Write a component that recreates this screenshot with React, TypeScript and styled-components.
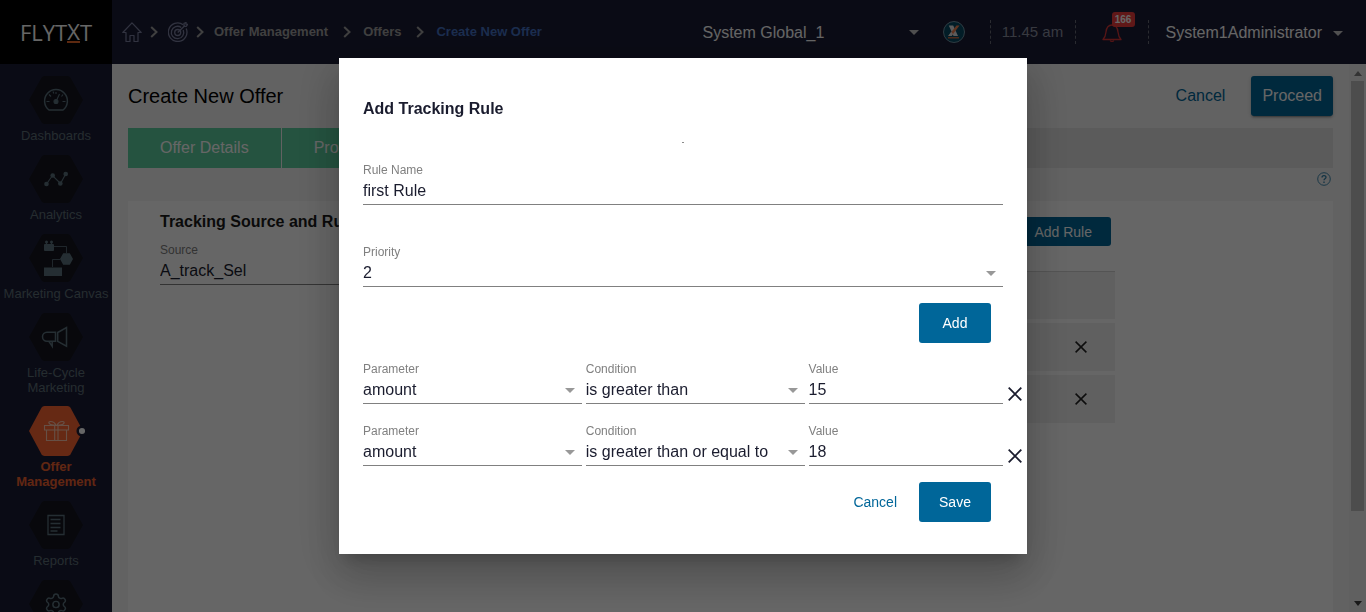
import React, { useId, useState } from "react";
import styled, { createGlobalStyle, css } from "styled-components";
import { Settings } from "lucide-react";

const GlobalStyle = createGlobalStyle`
  *, *::before, *::after { box-sizing: border-box; }
  html, body { margin: 0; height: 100%; overflow: hidden; }
  body { font-family: "Liberation Sans", Arial, sans-serif; font-size: 16px; line-height: 20px; color: #1a1c2e; background: #f5f5f5; }
  button, input, select { font: inherit; color: inherit; margin: 0; padding: 0; border: 0; background: none; border-radius: 0; }
  button { cursor: pointer; }
  h1, h2, ol, ul { margin: 0; padding: 0; }
  ol, ul { list-style: none; }
  a { color: inherit; text-decoration: none; }
  svg { display: block; flex: none; }
`;

/* ---------- page frame ---------- */

const Shell = styled.div`
  height: 100vh;
  display: flex;
  flex-direction: column;
`;

const Header = styled.header`
  flex: none;
  height: 64px;
  display: flex;
  align-items: center;
  background: #1b1d36;
  color: #fff;
`;

const Logo = styled.a`
  flex: none;
  width: 112px;
  height: 64px;
  display: flex;
  align-items: center;
  justify-content: center;
  background: #000;
  font-family: "Open Sans", "Noto Sans", sans-serif;
  font-size: 22px;
  line-height: 24px;
`;

const LogoMark = styled.span`
  border-bottom: 2px solid #e8662a;
  line-height: 20px;
`;

const Crumbs = styled.ol`
  flex: 1;
  display: flex;
  align-items: center;
  padding-left: 10px;
  font-size: 13px;
  font-weight: bold;
  color: #a0a0a0;
`;

const Crumb = styled.li<{ $current?: boolean }>`
  display: flex;
  align-items: center;
  color: ${(p) => (p.$current ? "#4472c4" : "inherit")};
`;

const CrumbArrow = styled.svg<{ $wide?: boolean }>`
  margin: ${(p) => (p.$wide ? "0 12px 0 15px" : "0 10px 0 8px")};
`;

const ScopePicker = styled.label`
  width: 216px;
  flex: none;
  display: flex;
  align-items: center;
  margin-right: 24px;
`;

const ScopeSelect = styled.select`
  flex: 1;
  min-width: 0;
  appearance: none;
  height: 24px;
  padding-top: 2px;
`;

const Clock = styled.time`
  display: flex;
  align-items: center;
  justify-content: center;
  height: 24px;
  width: 86px;
  margin-left: 25px;
  border: 1px dashed #6a6c78;
  border-width: 0 1px;
  font-size: 15px;
  color: #8b90a0;
`;

const Alerts = styled.button`
  position: relative;
  width: 73px;
  height: 24px;
  padding-left: 26px;
  border-right: 1px dashed #6a6c78;
`;

const Badge = styled.span`
  position: absolute;
  left: 36px;
  top: -8px;
  width: 23px;
  height: 15px;
  border-radius: 3px;
  background: #f13c3c;
  color: #fff;
  font-size: 10px;
  line-height: 15px;
  font-weight: bold;
  text-align: center;
`;

const UserMenu = styled.button`
  display: flex;
  align-items: center;
  gap: 11px;
  padding: 2px 23px 0 17px;
`;

const Body = styled.div`
  flex: 1;
  min-height: 0;
  display: flex;
`;

/* ---------- side navigation ---------- */

const SideNav = styled.nav`
  flex: none;
  width: 112px;
  overflow: hidden;
  background: #1b1d36;
  padding-top: 12px;
`;

const NavList = styled.ul`
  display: flex;
  flex-direction: column;
  gap: 12px;
`;

const NavLink = styled.a<{ $active?: boolean }>`
  display: flex;
  flex-direction: column;
  align-items: center;
  gap: 4px;
  text-align: center;
  font-size: 13px;
  line-height: 15px;
  color: #5e7078;
  ${(p) => p.$active && css`
    color: #f3622f;
    font-weight: bold;
  `}
`;

const Hex = styled.svg<{ $active?: boolean }>`
  margin: ${(p) => (p.$active ? "-1px 0" : "0")};
  overflow: visible;
`;

const NavText = styled.span<{ $narrow?: boolean }>`
  width: ${(p) => (p.$narrow ? "84px" : "auto")};
  white-space: ${(p) => (p.$narrow ? "normal" : "nowrap")};
`;

/* ---------- page content ---------- */

const Main = styled.main`
  flex: 1;
  min-width: 0;
  display: flex;
  flex-direction: column;
  padding: 12px 16px 0;
`;

const TitleRow = styled.div`
  display: flex;
  align-items: center;
  height: 40px;
  margin-bottom: 12px;
`;

const PageTitle = styled.h1`
  flex: 1;
  font-size: 20px;
  line-height: 24px;
  font-weight: normal;
  color: #000;
`;

const Button = styled.button<{ $kind?: "flat" | "small" | "page" }>`
  height: 40px;
  min-width: 72px;
  border-radius: 3px;
  background: #006699;
  color: #fff;
  font-size: 14px;
  ${(p) => p.$kind === "page" && css`
    padding: 0 11px;
    font-size: 16px;
    box-shadow: 0 3px 1px -2px rgba(0, 0, 0, 0.2), 0 2px 2px rgba(0, 0, 0, 0.14), 0 1px 5px rgba(0, 0, 0, 0.12);
  `}
  ${(p) => p.$kind === "small" && css`
    height: 29px;
    padding: 0 19px;
  `}
  ${(p) => p.$kind === "flat" && css`
    min-width: 0;
    background: none;
    color: #006699;
  `}
`;

const PageCancel = styled.a`
  color: #006699;
  margin-right: 26px;
`;

const Stepper = styled.ol`
  display: flex;
  height: 40px;
  background: #e4e4e4;
`;

const Step = styled.li`
  display: flex;
  align-items: center;
  padding: 0 32px;
  background: #5cd0a0;
  color: #fff;
  border-right: 1px solid #f5f5f5;
`;

const HelpRow = styled.div`
  display: flex;
  align-items: flex-start;
  justify-content: flex-end;
  height: 33px;
  padding: 4px 2px 0 0;
`;

const Card = styled.section`
  flex: 1;
  display: grid;
  grid-template-columns: 1fr 2fr;
  gap: 40px;
  padding: 0 218px 0 32px;
  background: #fff;
`;

const SourceColumn = styled.div`
  padding-top: 11px;
`;

const SectionTitle = styled.h2`
  margin-bottom: 11px;
  font-size: 16px;
  white-space: nowrap;
  color: #1a1a1a;
`;

const RulesColumn = styled.div`
  display: flex;
  flex-direction: column;
  padding-top: 16px;
`;

const RulesToolbar = styled.div`
  display: flex;
  justify-content: flex-end;
  padding: 0 4px 21px 0;
`;

const RulesTable = styled.table`
  width: 100%;
  border-spacing: 0 4px;
  font-size: 14px;
  text-align: left;

  th, td { height: 48px; padding: 0 27px; background: #f0f0f0; }
  th { border-top: 1px solid #d2d2d2; }
  th:last-child, td:last-child { width: 67px; }
`;

const IconButton = styled.button`
  display: flex;
  align-items: center;
  justify-content: center;
`;

const ScrollTrack = styled.div`
  flex: none;
  width: 17px;
  display: flex;
  flex-direction: column;
  align-items: center;
  padding: 7px 0 6px;
  background: #f1f1f1;
`;

const ScrollThumb = styled.div`
  flex: 430;
  width: 13px;
  margin-top: 5px;
  background: #c1c1c1;
`;

const ScrollRest = styled.div`
  flex: 90;
`;

/* ---------- form fields ---------- */

const FieldBox = styled.div`
  position: relative;
  min-width: 0;
  display: flex;
  flex-direction: column;
  gap: 4px;
  padding-bottom: 3px;
  border-bottom: 1px solid #808080;
`;

const FieldLabel = styled.label`
  font-size: 12px;
  line-height: 14px;
  color: #808080;
`;

const controlStyle = css`
  width: 100%;
  height: 20px;
  line-height: 20px;
  outline: 0;
  appearance: none;
`;

const TextInput = styled.input`${controlStyle}`;
const SelectInput = styled.select`${controlStyle}`;

const FieldCaret = styled.svg`
  position: absolute;
  right: 7px;
  bottom: 10px;
  pointer-events: none;
`;

/* ---------- dialog ---------- */

const Backdrop = styled.div`
  position: fixed;
  inset: 0;
  display: flex;
  align-items: center;
  justify-content: center;
  background: rgba(0, 0, 0, 0.6);
`;

const Dialog = styled.form`
  width: 688px;
  max-width: 100%;
  padding: 41px 24px 32px;
  background: #fff;
  box-shadow: 0 11px 15px -7px rgba(0, 0, 0, 0.2), 0 24px 38px 3px rgba(0, 0, 0, 0.14),
    0 9px 46px 8px rgba(0, 0, 0, 0.12);
`;

const DialogTitle = styled.h2`
  font-size: 16px;
  line-height: 20px;
`;

const StatusDot = styled.div`
  width: 2px;
  height: 1px;
  margin: 23px auto 20px;
  background: #8a8a8a;
`;

const Fields = styled.div`
  display: grid;
  gap: 40px;
`;

const Actions = styled.div<{ $end?: boolean }>`
  display: flex;
  justify-content: flex-end;
  gap: 22px;
  padding-right: 12px;
  margin: ${(p) => (p.$end ? "16px 0 0" : "16px 0 19px")};
`;

const Conditions = styled.div`
  display: grid;
  gap: 20px;
`;

const ConditionRow = styled.div`
  display: flex;
  align-items: flex-end;
  margin-right: -24px;
`;

const ConditionFields = styled.div`
  flex: 1;
  display: grid;
  grid-template-columns: 9fr 9fr 8fr;
  gap: 4px;
`;

const RemoveButton = styled(IconButton)`
  width: 24px;
  height: 20px;
`;

/* ---------- small drawings ---------- */

const Caret = ({ color = "#c8c8c8" }: { color?: string }) => (
  <svg width="10" height="5" viewBox="0 0 10 5"><path d="M0 0h10L5 5z" fill={color} /></svg>
);

const Cross = ({ size, color }: { size: number; color: string }) => (
  <svg width={size} height={size} viewBox="0 0 14 14">
    <path d="M.7.7l12.6 12.6M13.3.7L.7 13.3" stroke={color} strokeWidth="1.8" fill="none" />
  </svg>
);

const Arrow = ({ wide }: { wide?: boolean }) => (
  <CrumbArrow $wide={wide} width="8" height="12" viewBox="0 0 8 12">
    <path d="M1.2 1l5.3 5-5.3 5" stroke="#a0a0a0" strokeWidth="2" fill="none" />
  </CrumbArrow>
);

const HomeIcon = () => (
  <svg width="20" height="20" viewBox="0 0 20 20">
    <path d="M10 .8L.8 10.5H4v9h4v-6h4v6h4v-9h3.200z" fill="none" stroke="#7c80a0" strokeWidth="1.2" strokeLinejoin="round" />
  </svg>
);

const TargetIcon = () => (
  <svg width="20" height="20" viewBox="0 0 20 20" fill="none" stroke="#7c80a0" strokeWidth="1.300">
    <path d="M15.200 2.700A9.300 9.300 0 1 0 18.200 6.500" />
    <path d="M13.200 5.500A6.200 6.200 0 1 0 15.200 8" />
    <circle cx="9.700" cy="10.500" r="3" />
    <path d="M9.700 10.500L17 3.500M16 4.300V1.500L18 .5v1.700l1.700.2-1.500 2z" />
  </svg>
);

const BrandBadge = () => (
  <svg width="22" height="22" viewBox="0 0 22 22">
    <circle cx="11" cy="11" r="10.500" fill="#064a63" stroke="#8fb0be" strokeWidth=".8" />
    <path d="M5.800 4.500h4.400l4.800 10.500H10.500z" fill="#e6e6e6" />
    <path d="M16.500 4.500h-3L5.200 15h3.400z" fill="#f08050" />
    <path d="M5.200 15l3-4.200 1.800 2.200L8.600 15z" fill="#e6e6e6" />
    <path d="M5 16.800h11" stroke="#f0703a" strokeWidth="1.200" />
  </svg>
);

const BellIcon = () => (
  <svg width="20" height="20" viewBox="0 0 20 20" fill="none" stroke="#d93636" strokeWidth="1.300" strokeLinejoin="round">
    <path d="M1 17.500c2-2 2.600-3.500 3-7.500.4-4 2.300-7 6-7s5.600 3 6 7c.4 4 1 5.500 3 7.500z" />
    <path d="M8.300 18.300c.3 1.400 3.100 1.400 3.400 0" />
  </svg>
);

const HelpIcon = () => (
  <svg width="14" height="14" viewBox="0 0 14 14" fill="none" stroke="#2f7fa8">
    <circle cx="7" cy="7" r="6.300" strokeWidth=".9" />
    <path d="M5 5.600C5 3 9 3 9 5.300 9 6.800 7 6.700 7 8.300M7 9.500V11" strokeWidth="1.300" />
  </svg>
);

const glyphs: Record<string, React.ReactNode> = {
  dashboards: (
    <>
      <path d="M20 34A11.400 11.400 0 1 1 34 34z" strokeWidth="1.500" />
      <circle cx="27" cy="25.500" r="2" fill="currentColor" />
      <path d="M27 25.500l3.500-7.500M17.500 25.500h3M33.500 25.500h3M20 18.500l2 2M34 18.500l-1.500 2M24 15.500l.8 2M27 16v2" />
    </>
  ),
  analytics: (
    <>
      <path d="M17.500 29l6-8.500 8 8 5.200-9.500" />
      <g fill="currentColor" stroke="none">
        <circle cx="17.500" cy="29" r="2.300" /><circle cx="23.700" cy="20.500" r="2.300" />
        <circle cx="31.300" cy="28.500" r="2.300" /><circle cx="36.700" cy="19" r="2.300" />
      </g>
    </>
  ),
  canvas: (
    <>
      <g fill="currentColor" stroke="none">
        <rect x="15" y="10" width="10" height="7" rx="1" />
        <circle cx="17.500" cy="8" r="1.500" /><circle cx="22.500" cy="8" r="1.500" />
        <path d="M17 8h1v3h-1zM22 8h1v3h-1zM34.200 19.200h6.600L44 25l-3.200 5.800h-6.600L31 25z" />
        <rect x="15" y="33.500" width="18" height="8.500" />
      </g>
      <path d="M25 12.500h12.500V19M31 25.500h-7.500V33" strokeWidth=".8" />
    </>
  ),
  lifecycle: (
    <g strokeWidth="1.500">
      <path d="M26.500 19.300v9H18a4.500 4.500 0 0 1 0-9zM28.700 19.500l8.800-5v18.700l-8.800-4.900z" />
      <path d="M20 28.500l3.200 4.800v-4.800" />
    </g>
  ),
  offer: (
    <>
      <path d="M15.500 19.500h24V24h-24zM17.500 24h20v10.500h-20zM25.700 19.500v15M29 19.500v15" />
      <path d="M27 19.300c-8 0-8.500-3.800-5.500-3.800 2.500 0 4.500 1.500 5.500 3.800zM28 19.300c8 0 8.500-3.800 5.500-3.800-2.500 0-4.500 1.500-5.500 3.800z" />
    </>
  ),
  reports: (
    <path d="M19 14.500h16v19H19zM21.500 18.500h10M21.500 22.500h10M21.500 26.500h10M21.500 30h7" strokeWidth="1.300" />
  ),
  settings: <Settings x={14.5} y={12} width={25} height={25} strokeWidth={1.4} />,
};

const navItems = [
  { id: "dashboards", label: "Dashboards" },
  { id: "analytics", label: "Analytics" },
  { id: "canvas", label: "Marketing Canvas" },
  { id: "lifecycle", label: "Life-Cycle Marketing", narrow: true },
  { id: "offer", label: "Offer Management", narrow: true, active: true },
  { id: "reports", label: "Reports" },
  { id: "settings" },
];

const HexIcon = ({ id, active }: { id: string; active?: boolean }) => {
  const h = active ? 50 : 48;
  return (
    <Hex $active={active} width="54" height={h} viewBox={`0 0 54 ${h}`}>
      <path
        d={`M15.500 0h23q2 0 3 1.700L54 ${h / 2} 41.500 ${h - 1.7}q-1 1.700-3 1.700h-23q-2 0-3-1.700L0 ${h / 2} 12.500 1.700q1-1.700 3-1.700z`}
        fill={active ? "#ff6633" : "#14161f"}
      />
      <g fill="none" stroke="currentColor" strokeWidth="1.100" color={active ? "#ffc9b0" : "#5e7480"}>{glyphs[id]}</g>
      {active && <circle cx="53" cy="25" r="4.300" fill="#fff" stroke="#1b1d36" strokeWidth="2.500" />}
    </Hex>
  );
};

/* ---------- composed fields ---------- */

const TextField = ({ label, initial }: { label: string; initial: string }) => {
  const id = useId();
  const [value, setValue] = useState(initial);
  return (
    <FieldBox>
      <FieldLabel htmlFor={id}>{label}</FieldLabel>
      <TextInput id={id} value={value} onChange={(e) => setValue(e.target.value)} />
    </FieldBox>
  );
};

const SelectField = ({ label, options, initial }: { label: string; options: string[]; initial: string }) => {
  const id = useId();
  return (
    <FieldBox>
      <FieldLabel htmlFor={id}>{label}</FieldLabel>
      <SelectInput id={id} defaultValue={initial}>
        {options.map((o) => <option key={o}>{o}</option>)}
      </SelectInput>
      <FieldCaret width="10" height="5" viewBox="0 0 10 5"><path d="M0 0h10L5 5z" fill="#989898" /></FieldCaret>
    </FieldBox>
  );
};

const operators = ["is greater than", "is greater than or equal to"];

export default function App() {
  const [conditions, setConditions] = useState([
    { id: 1, operator: operators[0], value: "15" },
    { id: 2, operator: operators[1], value: "18" },
  ]);
  const addCondition = () =>
    setConditions((list) => [...list, { id: Date.now(), operator: operators[0], value: "" }]);
  const removeCondition = (id: number) => setConditions((list) => list.filter((c) => c.id !== id));

  return (
    <>
      <GlobalStyle />
      <Shell>
        <Header>
          <Logo href="#">FLYT<LogoMark>X</LogoMark>T</Logo>
          <Crumbs>
            <Crumb><a href="#" aria-label="Home"><HomeIcon /></a><Arrow /></Crumb>
            <Crumb><a href="#" aria-label="Campaigns"><TargetIcon /></a><Arrow /></Crumb>
            <Crumb><a href="#">Offer Management</a><Arrow wide /></Crumb>
            <Crumb><a href="#">Offers</a><Arrow wide /></Crumb>
            <Crumb $current>Create New Offer</Crumb>
          </Crumbs>
          <ScopePicker>
            <ScopeSelect aria-label="Scope"><option>System Global_1</option></ScopeSelect>
            <Caret />
          </ScopePicker>
          <BrandBadge />
          <Clock>11.45 am</Clock>
          <Alerts aria-label="Notifications"><BellIcon /><Badge>166</Badge></Alerts>
          <UserMenu>System1Administrator<Caret /></UserMenu>
        </Header>
        <Body>
          <SideNav>
            <NavList>
              {navItems.map((n) => (
                <li key={n.id}>
                  <NavLink href="#" $active={n.active} aria-label={n.label ?? n.id}>
                    <HexIcon id={n.id} active={n.active} />
                    {n.label && <NavText $narrow={n.narrow}>{n.label}</NavText>}
                  </NavLink>
                </li>
              ))}
            </NavList>
          </SideNav>
          <Main>
            <TitleRow>
              <PageTitle>Create New Offer</PageTitle>
              <PageCancel href="#">Cancel</PageCancel>
              <Button $kind="page">Proceed</Button>
            </TitleRow>
            <Stepper>
              <Step>Offer Details</Step>
              <Step>Products</Step>
            </Stepper>
            <HelpRow><IconButton aria-label="Help"><HelpIcon /></IconButton></HelpRow>
            <Card>
              <SourceColumn>
                <SectionTitle>Tracking Source and Rules</SectionTitle>
                <SelectField label="Source" options={["A_track_Sel"]} initial="A_track_Sel" />
              </SourceColumn>
              <RulesColumn>
                <RulesToolbar><Button $kind="small">Add Rule</Button></RulesToolbar>
                <RulesTable>
                  <thead><tr><th /><th /></tr></thead>
                  <tbody>
                    {[1, 2].map((n) => (
                      <tr key={n}>
                        <td />
                        <td><IconButton aria-label="Remove rule"><Cross size={12} color="#222" /></IconButton></td>
                      </tr>
                    ))}
                  </tbody>
                </RulesTable>
              </RulesColumn>
            </Card>
          </Main>
          <ScrollTrack aria-hidden="true">
            <svg width="8" height="5" viewBox="0 0 8 5"><path d="M0 5h8L4 0z" fill="#808080" /></svg>
            <ScrollThumb />
            <ScrollRest />
            <svg width="8" height="5" viewBox="0 0 8 5"><path d="M0 0h8L4 5z" fill="#404040" /></svg>
          </ScrollTrack>
        </Body>
      </Shell>
      <Backdrop>
        <Dialog role="dialog" aria-modal="true" aria-labelledby="rule-title" onSubmit={(e) => e.preventDefault()}>
          <DialogTitle id="rule-title">Add Tracking Rule</DialogTitle>
          <StatusDot />
          <Fields>
            <TextField label="Rule Name" initial="first Rule" />
            <SelectField label="Priority" options={["1", "2", "3"]} initial="2" />
          </Fields>
          <Actions><Button type="button" onClick={addCondition}>Add</Button></Actions>
          <Conditions>
            {conditions.map((c) => (
              <ConditionRow key={c.id}>
                <ConditionFields>
                  <SelectField label="Parameter" options={["amount"]} initial="amount" />
                  <SelectField label="Condition" options={operators} initial={c.operator} />
                  <TextField label="Value" initial={c.value} />
                </ConditionFields>
                <RemoveButton type="button" aria-label="Remove condition" onClick={() => removeCondition(c.id)}>
                  <Cross size={14} color="#1a1c2e" />
                </RemoveButton>
              </ConditionRow>
            ))}
          </Conditions>
          <Actions $end>
            <Button type="button" $kind="flat">Cancel</Button>
            <Button type="submit">Save</Button>
          </Actions>
        </Dialog>
      </Backdrop>
    </>
  );
}
